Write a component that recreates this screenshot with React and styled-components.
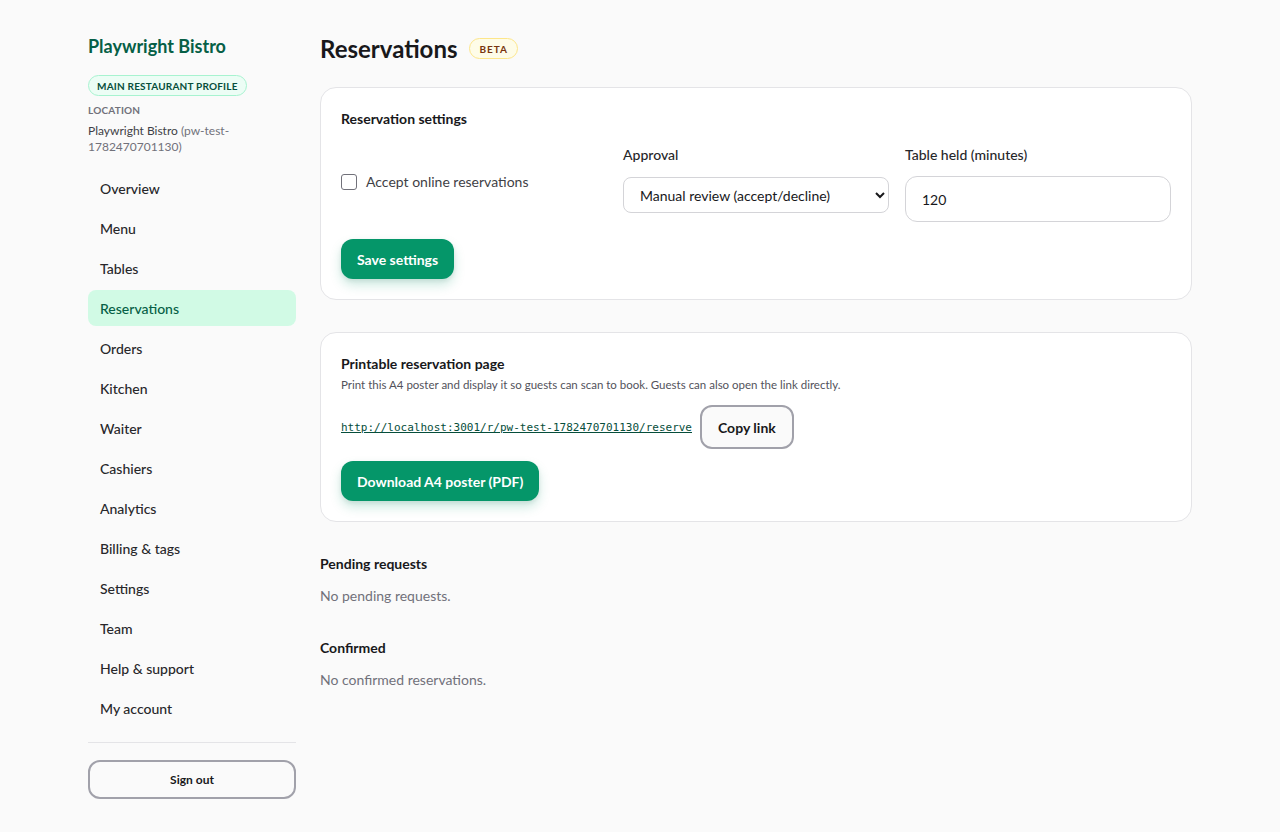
import React from "react";
import styled, { createGlobalStyle } from "styled-components";

const Global = createGlobalStyle`
  * { box-sizing: border-box; }
  html, body { margin: 0; padding: 0; background: #fafafa; }
  body { font-family: Lato, "Noto Sans", sans-serif; color: #18181b; }
`;

const Layout = styled.div`
  display: flex;
  gap: 24px;
  padding: 32px 88px 32px 88px;
  min-height: 832px;
`;

const Sidebar = styled.aside`
  width: 208px;
  flex-shrink: 0;
  display: flex;
  flex-direction: column;
`;

const Brand = styled.div`
  font-size: 18px;
  font-weight: 700;
  color: #065f46;
  line-height: 28px;
`;

const ProfileBadge = styled.span`
  align-self: flex-start;
  margin-top: 15px;
  display: inline-flex;
  align-items: center;
  height: 21px;
  padding: 0 8px;
  border-radius: 999px;
  background: #ecfdf5;
  border: 1px solid #a7f3d0;
  color: #064e3b;
  font-size: 10px;
  font-weight: 700;
  letter-spacing: 0.2px;
`;

const SmallLabel = styled.div`
  margin-top: 7px;
  font-size: 10px;
  font-weight: 700;
  color: #71717a;
  letter-spacing: 0.2px;
  line-height: 14px;
`;

const LocationText = styled.div`
  margin-top: 6px;
  font-size: 12px;
  line-height: 16px;
  color: #3f3f46;
`;

const LocationSub = styled.span`
  color: #71717a;
`;

const Nav = styled.nav`
  margin-top: 15px;
  display: flex;
  flex-direction: column;
  gap: 4px;
`;

const NavItem = styled.a`
  display: flex;
  align-items: center;
  height: 36px;
  padding: 0 12px;
  border-radius: 8px;
  font-size: 14px;
  font-weight: 500;
  color: ${(p) => (p.$active ? "#065f46" : "#27272a")};
  background: ${(p) => (p.$active ? "#d1fae5" : "transparent")};
  text-decoration: none;
`;

const Divider = styled.hr`
  border: none;
  border-top: 1px solid #e4e4e7;
  margin: 16px 0 17px;
`;

const OutlineButton = styled.button`
  font-family: inherit;
  height: ${(p) => p.$h || 40}px;
  padding: 0 16px;
  border: 2px solid #a1a1aa;
  border-radius: 12px;
  background: #fafafa;
  color: #18181b;
  font-size: ${(p) => p.$fs || 14}px;
  font-weight: 700;
  cursor: pointer;
  width: ${(p) => (p.$full ? "100%" : "auto")};
`;

const Main = styled.main`
  width: 872px;
  display: flex;
  flex-direction: column;
`;

const HeaderRow = styled.div`
  display: flex;
  align-items: center;
  gap: 12px;
  height: 33px;
`;

const PageTitle = styled.h1`
  margin: 0;
  font-size: 24px;
  font-weight: 700;
  color: #18181b;
`;

const BetaBadge = styled.span`
  display: inline-flex;
  align-items: center;
  height: 21px;
  padding: 0 9px;
  border-radius: 999px;
  background: #fefce8;
  border: 1px solid #fde68a;
  color: #78350f;
  font-size: 10px;
  font-weight: 700;
  letter-spacing: 1px;
`;

const Card = styled.section`
  margin-top: ${(p) => p.$mt || 0}px;
  background: #ffffff;
  border: 1px solid #e4e4e7;
  border-radius: 16px;
  padding: 20px;
  display: flex;
  flex-direction: column;
`;

const CardTitle = styled.h2`
  margin: 0;
  font-size: 14px;
  font-weight: 700;
  line-height: 22px;
  color: #18181b;
`;

const CardDesc = styled.p`
  margin: 0;
  font-size: 11.5px;
  line-height: 20px;
  color: #52525b;
`;

const SettingsGrid = styled.div`
  margin-top: 14px;
  display: grid;
  grid-template-columns: repeat(3, 1fr);
  gap: 16px;
`;

const CheckLabel = styled.label`
  align-self: center;
  display: flex;
  align-items: center;
  gap: 9px;
  font-size: 14px;
  color: #3f3f46;
  margin-top: -3px;
`;

const Box = styled.span`
  width: 16px;
  height: 16px;
  border: 1px solid #71717a;
  border-radius: 3px;
  background: #fff;
`;

const Field = styled.div`
  display: flex;
  flex-direction: column;
`;

const FieldLabel = styled.label`
  font-size: 14px;
  font-weight: 500;
  color: #27272a;
  line-height: 22px;
  margin-bottom: 11px;
`;

const Select = styled.select`
  font-family: inherit;
  height: 36px;
  border: 1px solid #d4d4d8;
  border-radius: 8px;
  background: #fff;
  padding: 0 12px;
  font-size: 14px;
  color: #18181b;
`;

const Input = styled.input`
  font-family: inherit;
  height: 46px;
  margin-top: -1px;
  border: 1px solid #d4d4d8;
  border-radius: 12px;
  background: #fff;
  padding: 0 16px;
  font-size: 14px;
  color: #18181b;
`;

const PrimaryButton = styled.button`
  align-self: flex-start;
  margin-top: ${(p) => p.$mt || 0}px;
  font-family: inherit;
  height: 40px;
  padding: 0 16px;
  border: none;
  border-radius: 12px;
  background: #059669;
  color: #fff;
  font-size: 14px;
  font-weight: 700;
  box-shadow: 0 6px 12px rgba(5, 150, 105, 0.2), 0 2px 4px rgba(0, 0, 0, 0.08);
  cursor: pointer;
`;

const LinkRow = styled.div`
  margin-top: 10px;
  display: flex;
  align-items: center;
  gap: 8px;
`;

const MonoLink = styled.a`
  font-family: "DejaVu Sans Mono", "Liberation Mono", monospace;
  font-size: 11px;
  color: #064e3b;
  text-decoration: underline;
`;

const Section = styled.div`
  margin-top: ${(p) => p.$mt || 0}px;
  display: flex;
  flex-direction: column;
  gap: 10px;
`;

const SectionTitle = styled.h3`
  margin: 0;
  font-size: 14px;
  font-weight: 700;
  line-height: 22px;
  color: #18181b;
`;

const Muted = styled.p`
  margin: 0;
  font-size: 14px;
  line-height: 22px;
  color: #71717a;
`;

const navItems = [
  "Overview",
  "Menu",
  "Tables",
  "Reservations",
  "Orders",
  "Kitchen",
  "Waiter",
  "Cashiers",
  "Analytics",
  "Billing & tags",
  "Settings",
  "Team",
  "Help & support",
  "My account",
];

export default function App() {
  return (
    <>
      <Global />
      <Layout>
        <Sidebar>
          <Brand>Playwright Bistro</Brand>
          <ProfileBadge>MAIN RESTAURANT PROFILE</ProfileBadge>
          <SmallLabel>LOCATION</SmallLabel>
          <LocationText>
            Playwright Bistro <LocationSub>(pw-test-1782470701130)</LocationSub>
          </LocationText>
          <Nav>
            {navItems.map((n) => (
              <NavItem key={n} $active={n === "Reservations"}>
                {n}
              </NavItem>
            ))}
          </Nav>
          <Divider />
          <OutlineButton $full $h={39} $fs={12}>
            Sign out
          </OutlineButton>
        </Sidebar>
        <Main>
          <HeaderRow>
            <PageTitle>Reservations</PageTitle>
            <BetaBadge>BETA</BetaBadge>
          </HeaderRow>
          <Card $mt={22}>
            <CardTitle>Reservation settings</CardTitle>
            <SettingsGrid>
              <CheckLabel>
                <Box />
                Accept online reservations
              </CheckLabel>
              <Field>
                <FieldLabel>Approval</FieldLabel>
                <Select defaultValue="manual">
                  <option value="manual">Manual review (accept/decline)</option>
                  <option value="auto">Automatic</option>
                </Select>
              </Field>
              <Field>
                <FieldLabel>Table held (minutes)</FieldLabel>
                <Input defaultValue="120" />
              </Field>
            </SettingsGrid>
            <PrimaryButton $mt={17}>Save settings</PrimaryButton>
          </Card>
          <Card $mt={32}>
            <CardTitle>Printable reservation page</CardTitle>
            <CardDesc>
              Print this A4 poster and display it so guests can scan to book. Guests can also open the link directly.
            </CardDesc>
            <LinkRow>
              <MonoLink>http://localhost:3001/r/pw-test-1782470701130/reserve</MonoLink>
              <OutlineButton $h={44}>Copy link</OutlineButton>
            </LinkRow>
            <PrimaryButton $mt={12}>Download A4 poster (PDF)</PrimaryButton>
          </Card>
          <Section $mt={31}>
            <SectionTitle>Pending requests</SectionTitle>
            <Muted>No pending requests.</Muted>
          </Section>
          <Section $mt={30}>
            <SectionTitle>Confirmed</SectionTitle>
            <Muted>No confirmed reservations.</Muted>
          </Section>
        </Main>
      </Layout>
    </>
  );
}
